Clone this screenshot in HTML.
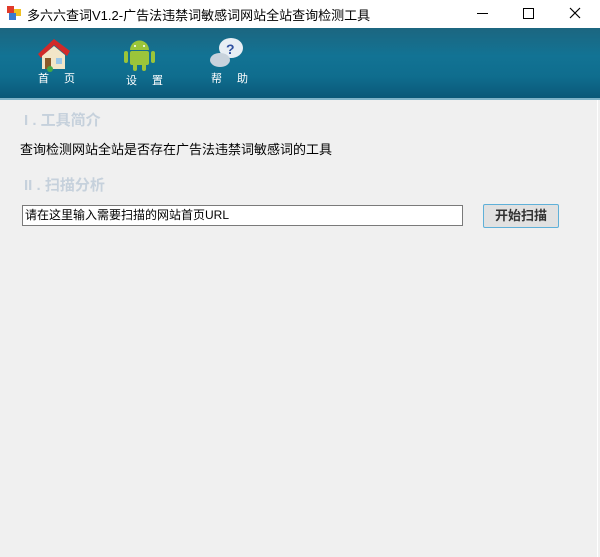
<!DOCTYPE html>
<html><head><meta charset="utf-8"><style>
body{margin:0;width:600px;height:557px;overflow:hidden;background:#f0f0f0;font-family:"Liberation Sans","Noto Sans CJK SC",sans-serif;position:relative}
.t{position:absolute;left:0;top:0;width:600px;height:28px;background:#fff}
.hd{position:absolute;left:0;top:28px;width:600px;height:70px;background:linear-gradient(#1c6680 0%,#127394 40%,#0f6d8e 70%,#0a5878 100%);border-bottom:2px solid #7fb3c8}
.ab{position:absolute;white-space:nowrap}
.lbl{position:absolute;color:#fff;font-size:11px;letter-spacing:6px;top:72px}
.sec{color:#c6d1dc;font-weight:bold;font-size:15px}
</style></head><body>
<div class="t">
<svg class="ab" style="left:7px;top:6px" width="14" height="14"><rect x="0" y="0" width="7" height="7" fill="#e03a2a"/><rect x="7" y="3" width="7" height="7" fill="#f0c020"/><rect x="2" y="7" width="7" height="7" fill="#3a7ad0"/></svg>
<div class="ab" style="left:27px;top:5px;font-size:13px;color:#000">多六六查词V1.2-广告法违禁词敏感词网站全站查询检测工具</div>
<div class="ab" style="left:477px;top:13px;width:11px;height:1px;background:#000"></div>
<div class="ab" style="left:523px;top:8px;width:9px;height:9px;border:1px solid #000"></div>
<svg class="ab" style="left:569px;top:7px" width="12" height="12"><path d="M1 1L11 11M11 1L1 11" stroke="#000" stroke-width="1.2"/></svg>
</div>
<div class="hd">
<svg class="ab" style="left:34px;top:8px" width="38" height="36"><path d="M4 18L20 3L36 15L33 20L20 9L7 22Z" fill="#d02a2a"/><path d="M8 20L20 10L31 19V33H8Z" fill="#f2e6c8"/><rect x="11" y="22" width="6" height="11" fill="#8a5a2a"/><rect x="22" y="22" width="6" height="6" fill="#9cc8e8"/><circle cx="16" cy="33" r="3" fill="#4a4"/></svg>
<div class="lbl" style="left:38px;top:42px">首 页</div>
<svg class="ab" style="left:122px;top:9px" width="36" height="36"><path d="M8 13A9 9 0 0 1 27 13Z" fill="#9bc53a"/><rect x="8" y="14" width="19" height="14" rx="2" fill="#9bc53a"/><rect x="2" y="14" width="4" height="12" rx="2" fill="#9bc53a"/><rect x="29" y="14" width="4" height="12" rx="2" fill="#9bc53a"/><rect x="11" y="26" width="4" height="8" rx="2" fill="#9bc53a"/><rect x="20" y="26" width="4" height="8" rx="2" fill="#9bc53a"/><circle cx="13" cy="9" r="1" fill="#fff"/><circle cx="22" cy="9" r="1" fill="#fff"/></svg>
<div class="lbl" style="left:126px;top:44px">设 置</div>
<svg class="ab" style="left:207px;top:8px" width="38" height="34"><ellipse cx="24" cy="12" rx="12" ry="10" fill="#e8eef4"/><ellipse cx="13" cy="24" rx="10" ry="7" fill="#c8d2dc"/><text x="19" y="18" font-size="14" font-weight="bold" fill="#3050a0" font-family="Liberation Sans">?</text></svg>
<div class="lbl" style="left:211px;top:42px">帮 助</div>
</div>
<div class="ab sec" style="left:24px;top:109px">I . 工具简介</div>
<div class="ab" style="left:20px;top:139px;font-size:13px;color:#000">查询检测网站全站是否存在广告法违禁词敏感词的工具</div>
<div class="ab sec" style="left:24px;top:174px">II . 扫描分析</div>
<div class="ab" style="left:22px;top:205px;width:437px;height:19px;background:#fff;border:1px solid #7a7a7a;font-size:12px;line-height:19px;padding-left:2px;box-sizing:content-box">请在这里输入需要扫描的网站首页URL</div>
<div class="ab" style="left:483px;top:204px;width:74px;height:22px;background:#e1e1e1;border:1px solid #5fb0d8;border-radius:2px;font-size:13px;font-weight:bold;color:#333;text-align:center;line-height:22px">开始扫描</div>
<div class="ab" style="left:597px;top:100px;width:1px;height:457px;background:#fff"></div>
</body></html>
